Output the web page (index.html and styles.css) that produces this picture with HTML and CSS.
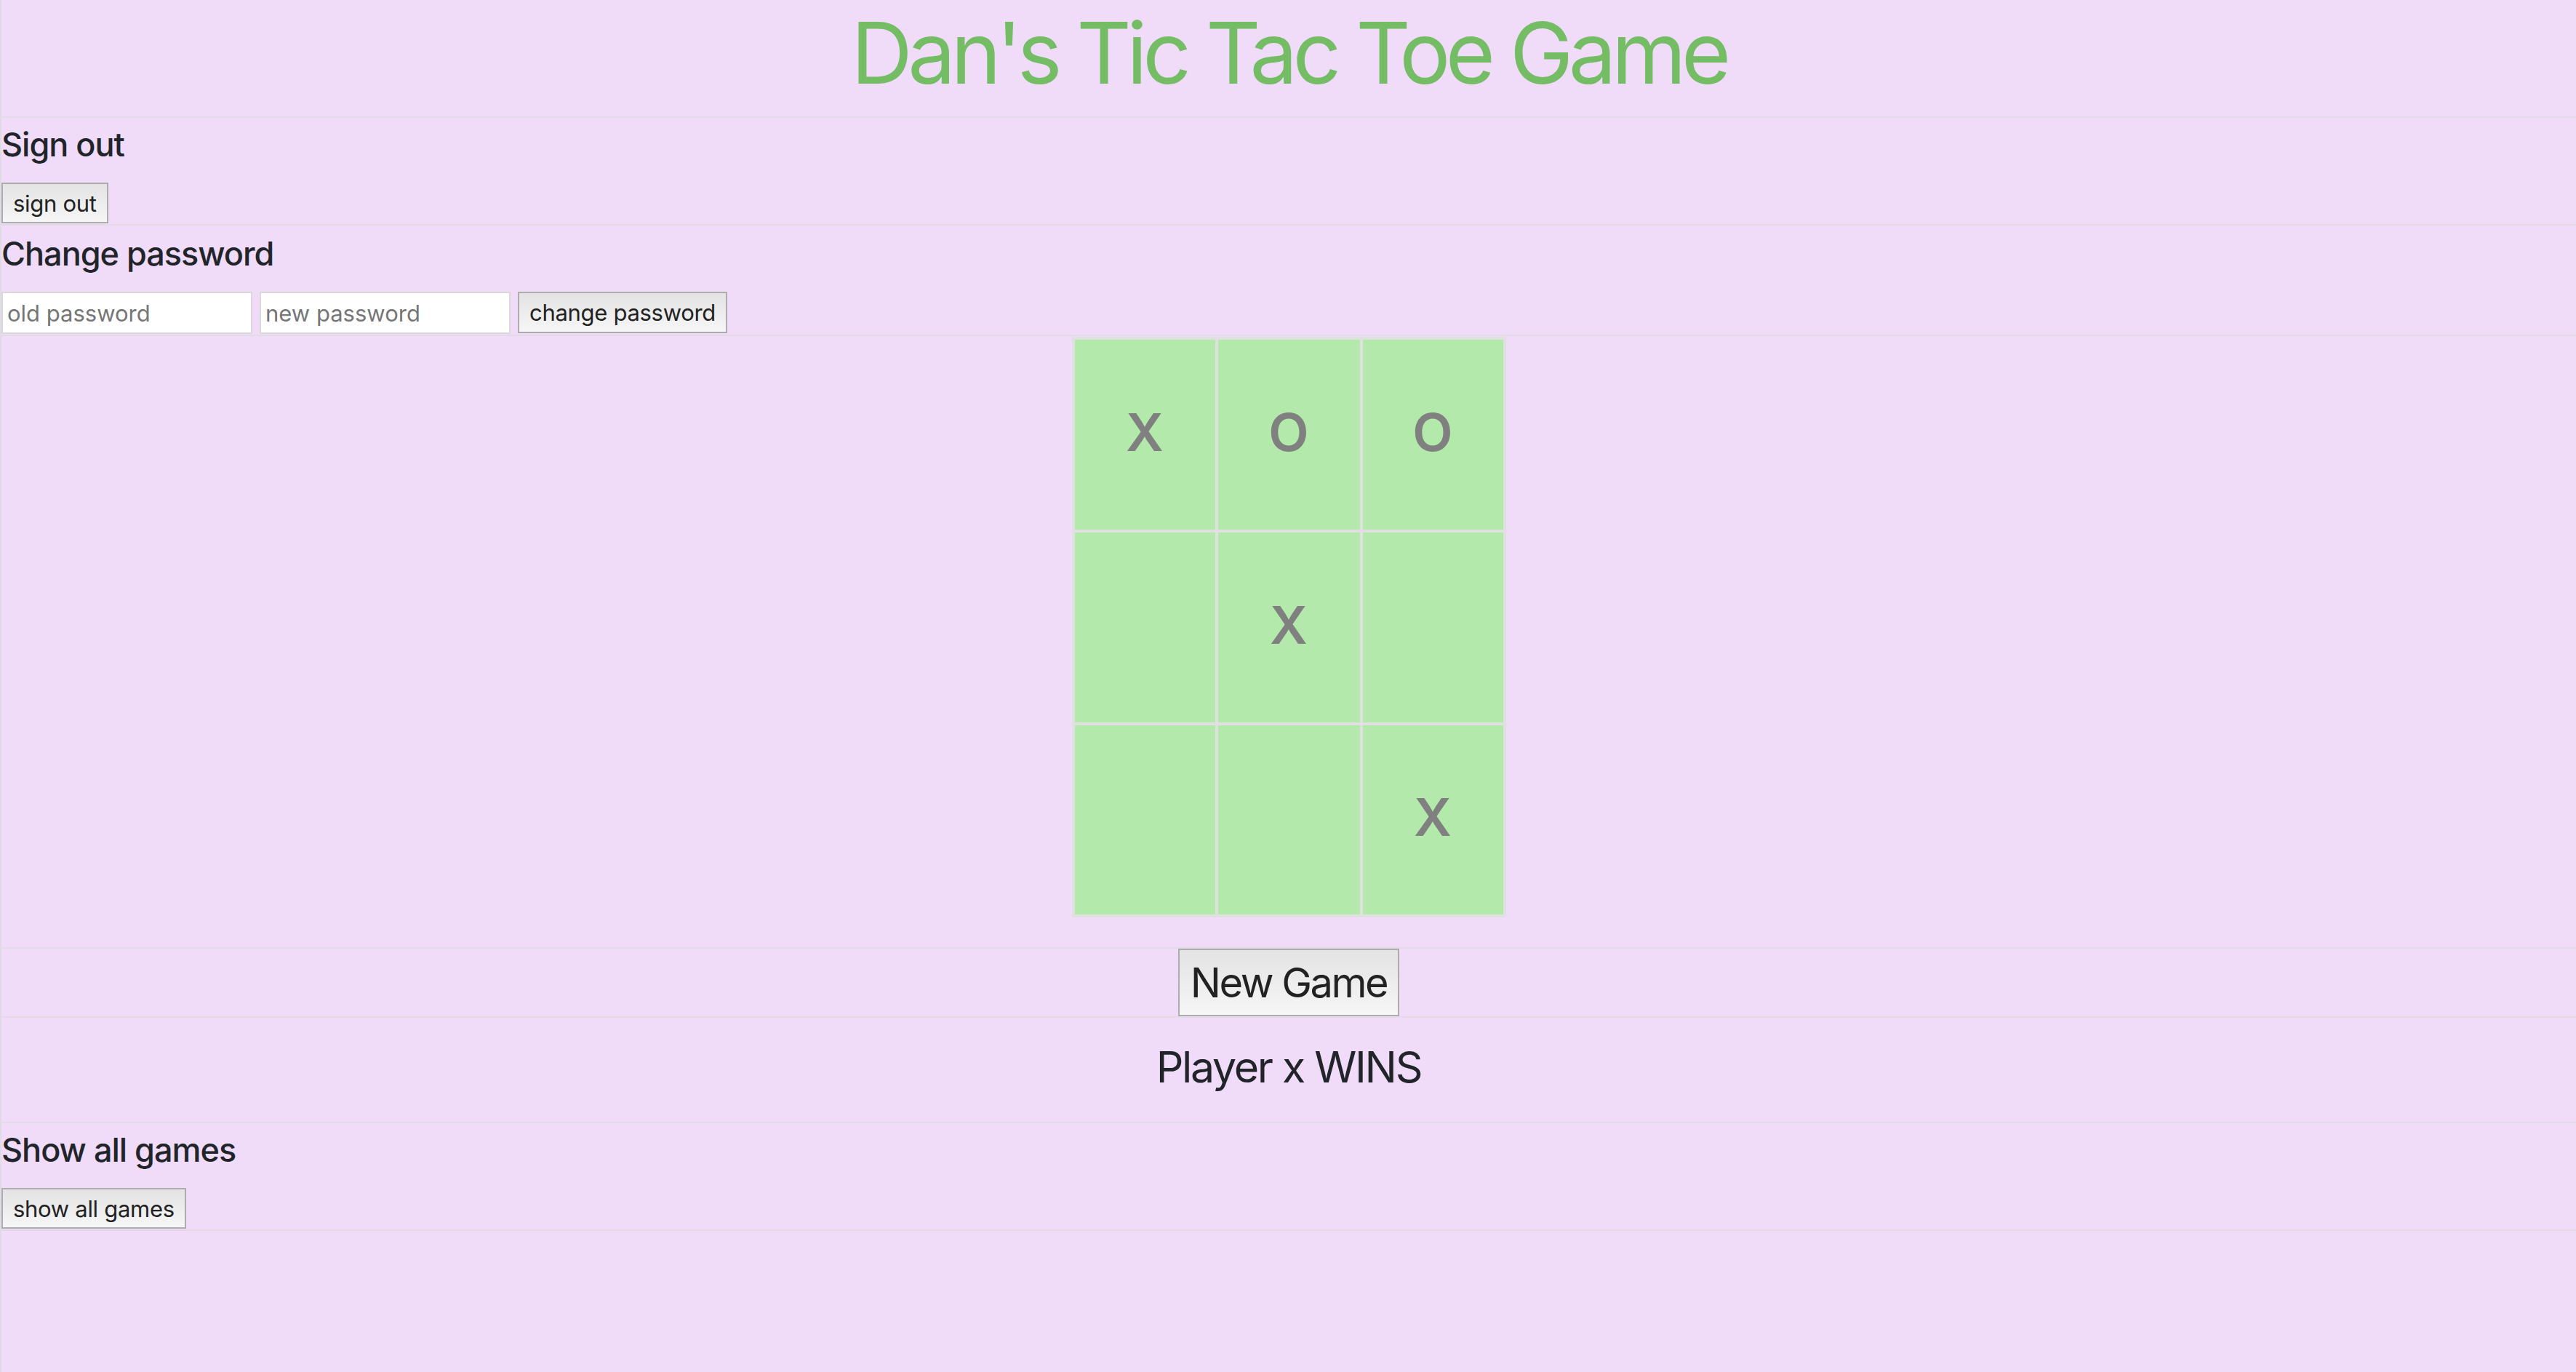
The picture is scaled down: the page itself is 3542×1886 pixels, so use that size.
FILE: index.html
```html
<!DOCTYPE html>
<html lang="en">
<head>
<meta charset="utf-8">
<title>Dan's Tic Tac Toe Game</title>
<link rel="stylesheet" href="styles.css">
</head>
<body>
  <header class="site-header">
    <h1 class="title">Dan's Tic Tac Toe Game</h1>
  </header>

  <section class="panel panel-signout">
    <h5 class="panel-title">Sign out</h5>
    <button class="btn" type="button">sign out</button>
  </section>

  <section class="panel panel-password">
    <h5 class="panel-title">Change password</h5>
    <form class="password-form">
      <input class="field" type="password" placeholder="old password">
      <input class="field" type="password" placeholder="new password">
      <button class="btn" type="button">change password</button>
    </form>
  </section>

  <section class="board-wrap">
    <div class="board">
      <div class="cell">X</div>
      <div class="cell">O</div>
      <div class="cell">O</div>
      <div class="cell"></div>
      <div class="cell">X</div>
      <div class="cell"></div>
      <div class="cell"></div>
      <div class="cell"></div>
      <div class="cell">X</div>
    </div>
  </section>

  <section class="new-game-row">
    <button class="btn btn-large" type="button">New Game</button>
  </section>

  <section class="status">
    <h4 class="status-text">Player x WINS</h4>
  </section>

  <section class="panel panel-games">
    <h5 class="panel-title">Show all games</h5>
    <button class="btn" type="button">show all games</button>
  </section>
</body>
</html>
```

FILE: styles.css
```css
html {
  background: #f0dbf9;
}

body {
  margin: 0;
  min-height: 100vh;
  box-sizing: border-box;
  border-left: 2px solid #e1dbe6;
  background: #f0dbf9;
  color: #212529;
  font-family: Inter, "Noto Sans", "Liberation Sans", sans-serif;
}

.site-header {
  padding: 3px 0 17px;
  border-bottom: 2px solid #e1dbe6;
  text-align: center;
}

.title {
  margin: 0;
  font-size: 117px;
  line-height: 140px;
  font-weight: 400;
  letter-spacing: -6.5px;
  color: #74bd65;
}

.panel {
  padding-bottom: 1px;
  border-bottom: 2px solid #e1dbe6;
}

.panel-signout { padding-top: 10px; }
.panel-password { padding-top: 12px; }
.panel-games { padding-top: 10px; }

.panel-title {
  margin: 0 0 25px;
  font-size: 45px;
  line-height: 54px;
  font-weight: 500;
  letter-spacing: -1px;
}

.btn {
  display: inline-flex;
  align-items: center;
  height: 56px;
  margin: 0;
  padding: 0 14px;
  box-sizing: border-box;
  border: 2px solid #adadad;
  border-radius: 0;
  background: linear-gradient(#e3e3e3, #f6f6f6);
  color: #222;
  font-family: Inter, "Noto Sans", "Liberation Sans", sans-serif;
  font-size: 31px;
  letter-spacing: -0.3px;
  line-height: 1;
}

.password-form {
  display: flex;
  gap: 10px;
  margin: 0;
}

.field {
  width: 345px;
  height: 58px;
  margin: 0;
  padding: 0 6px;
  box-sizing: border-box;
  border: 2px solid #d9d9d9;
  background: #fff;
  font-family: Inter, "Noto Sans", "Liberation Sans", sans-serif;
  font-size: 31px;
  color: #333;
}

.field::placeholder {
  color: #767676;
}

.password-form .btn {
  height: 57px;
}

.board-wrap {
  padding: 1px 0 41px;
  border-bottom: 2px solid #e1dbe6;
}

.board {
  display: grid;
  grid-template-columns: 193px 195px 193px;
  grid-template-rows: 261px 261px 260px;
  gap: 4px;
  width: max-content;
  margin: 0 auto;
  padding: 4px;
  background: #e0e0e0;
}

.cell {
  display: flex;
  align-items: center;
  justify-content: center;
  padding-bottom: 8px;
  box-sizing: border-box;
  background: #b3e9ab;
  color: #808080;
  font-size: 72px;
  font-weight: 600;
  line-height: 1;
}

.new-game-row {
  display: flex;
  justify-content: center;
  border-bottom: 2px solid #e1dbe6;
}

.btn-large {
  height: 93px;
  padding: 0 15px;
  font-size: 56px;
  letter-spacing: -2.5px;
}

.status {
  padding: 32px 0 40px;
  border-bottom: 2px solid #e1dbe6;
  text-align: center;
}

.status-text {
  margin: 0;
  font-size: 59px;
  line-height: 71px;
  font-weight: 400;
  letter-spacing: -2.3px;
}
```
